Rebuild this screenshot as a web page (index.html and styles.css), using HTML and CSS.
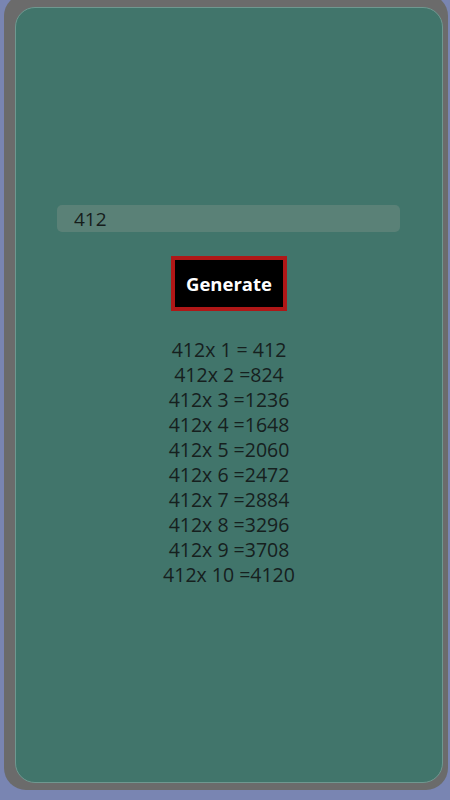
FILE: index.html
```html
<!DOCTYPE html>
<html lang="en">
<head>
  <meta charset="UTF-8" />
  <meta name="viewport" content="width=device-width, initial-scale=1.0"/>
  <title>Multiplication Table</title>
  <link rel="stylesheet" href="styles.css">
</head>
<body>
  <div class="frame">
    <div class="card">
      <input type="text" id="num" class="num-input" value="412" />
      <button class="gen-btn">Generate</button>
      <div class="results">
        <div>412x 1 = 412</div>
        <div>412x 2 =824</div>
        <div>412x 3 =1236</div>
        <div>412x 4 =1648</div>
        <div>412x 5 =2060</div>
        <div>412x 6 =2472</div>
        <div>412x 7 =2884</div>
        <div>412x 8 =3296</div>
        <div>412x 9 =3708</div>
        <div>412x 10 =4120</div>
      </div>
    </div>
  </div>
</body>
</html>
```
FILE: styles.css
```css
body {
  margin: 0;
  background-color: #7985b2;
  font-family: "Open Sans", "Noto Sans", sans-serif;
}

.frame {
  width: 444px;
  height: 796px;
  margin: -6px 0 0 4px;
  box-sizing: border-box;
  padding: 13px 5px 7px 11px;
  background-color: #6b6b6b;
  border-radius: 22px;
}

.card {
  height: 100%;
  box-sizing: border-box;
  background-color: #41756b;
  border: 1px solid #6f9890;
  border-radius: 20px;
  display: flex;
  flex-direction: column;
  align-items: center;
  padding-top: 197px;
}

.num-input {
  width: 343px;
  height: 27px;
  margin-right: 1px;
  box-sizing: border-box;
  padding: 0 17px;
  border: none;
  border-radius: 5px;
  background-color: #5a8177;
  color: #161d1c;
  font-family: inherit;
  font-size: 19px;
  outline: none;
}

.gen-btn {
  margin-top: 24px;
  padding: 12px 11px;
  background-color: #000;
  color: #fff;
  border: 4px solid #b01717;
  font-family: inherit;
  font-size: 18.5px;
  font-weight: bold;
  line-height: 23px;
}

.results {
  margin-top: 26px;
  text-align: center;
  font-size: 19.5px;
  line-height: 25px;
  color: #16201e;
}
```
